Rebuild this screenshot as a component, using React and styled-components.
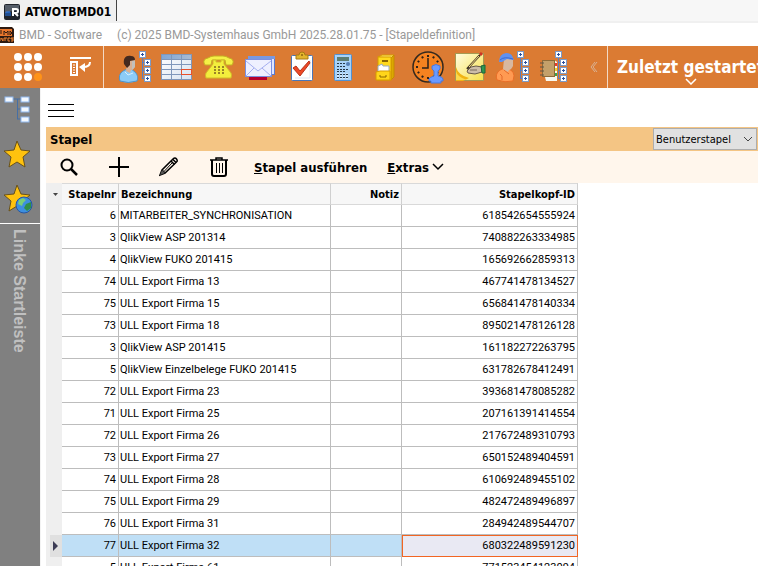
import React, { useState } from "react";

import styled, { createGlobalStyle } from "styled-components";

const rows = [
  { nr: 6, name: "MITARBEITER_SYNCHRONISATION", id: "618542654555924" },
  { nr: 3, name: "QlikView ASP 201314", id: "740882263334985" },
  { nr: 4, name: "QlikView FUKO 201415", id: "165692662859313" },
  { nr: 74, name: "ULL Export Firma 13", id: "467741478134527" },
  { nr: 75, name: "ULL Export Firma 15", id: "656841478140334" },
  { nr: 73, name: "ULL Export Firma 18", id: "895021478126128" },
  { nr: 3, name: "QlikView ASP 201415", id: "161182272263795" },
  { nr: 5, name: "QlikView Einzelbelege FUKO 201415", id: "631782678412491" },
  { nr: 72, name: "ULL Export Firma 23", id: "393681478085282" },
  { nr: 71, name: "ULL Export Firma 25", id: "207161391414554" },
  { nr: 72, name: "ULL Export Firma 26", id: "217672489310793" },
  { nr: 73, name: "ULL Export Firma 27", id: "650152489404591" },
  { nr: 74, name: "ULL Export Firma 28", id: "610692489455102" },
  { nr: 75, name: "ULL Export Firma 29", id: "482472489496897" },
  { nr: 76, name: "ULL Export Firma 31", id: "284942489544707" },
  { nr: 77, name: "ULL Export Firma 32", id: "680322489591230" },
  { nr: 5, name: "ULL Export Firma 61", id: "771523454123094" },
];

// small plus boxes hanging on a line, shared by the person and book icons
function Tree({ x = 0 }) {
  const boxes = [
    [26 + x, 5],
    [31 + x, 13],
    [31 + x, 21],
    [31 + x, 29],
  ];
  return (
    <g shapeRendering="crispEdges">
      <path
        d={`M${29.5 + x} 11V32.5M${29 + x} 16.5h3M${29 + x} 24.5h3M${29 + x} 32.5h3`}
        stroke="#5a7fc0"
        fill="none"
      />
      {boxes.map(([bx, by]) => (
        <g key={by}>
          <rect x={bx} y={by} width="7" height="7" fill="#7d9ac6" />
          <rect x={bx + 1} y={by + 1} width="5" height="5" fill="#fff" />
          <path
            d={`M${bx + 2} ${by + 3.5}h3M${bx + 3.5} ${by + 2}v3`}
            stroke="#2b4f9c"
          />
        </g>
      ))}
    </g>
  );
}

function PersonIcon() {
  return (
    <svg width="42" height="42" viewBox="0 0 42 42">
      <path
        d="M12 24L17 22L22 26C25 29 25 32 24 35Q15 38 7 35C5 29 8 26 12 24Z"
        fill="#8ccbf7"
        stroke="#4f93c9"
      />
      <path d="M12 26L15 29L20 27" stroke="#d5efff" fill="none" />
      <path d="M14 14L22 13V20Q21 24 18 24L17 27L13 25Z" fill="#d9b094" />
      <path d="M19 15h3v6l-3 3z" fill="#c3c0bc" />
      <path d="M11 18C10 12 13 9 18 10Q22 10 22 14L17 15V19L14 22Z" fill="#43291f" />
      <Tree />
    </svg>
  );
}

function TableIcon() {
  return (
    <svg width="42" height="42" viewBox="0 0 42 42" shapeRendering="crispEdges">
      <defs>
        <linearGradient id="tableHead">
          <stop offset="0" stopColor="#7fa6d6" />
          <stop offset="1" stopColor="#aabbd2" />
        </linearGradient>
        <linearGradient id="tableBody" x2="1" y2="1">
          <stop offset="0" stopColor="#fff" />
          <stop offset="1" stopColor="#d7e2f0" />
        </linearGradient>
      </defs>
      <rect x="6" y="8" width="31" height="26" fill="url(#tableBody)" />
      <rect x="6" y="8" width="31" height="6" fill="url(#tableHead)" />
      <path
        d="M6.5 8.5h30v25h-30zM16.5 8v26M26.5 8v26M6 13.5h31M6 18.5h31M6 23.5h31M6 28.5h31"
        stroke="#7f97bb"
        fill="none"
      />
      <path d="M26.5 23.5h10v5h-10z" stroke="#e8502c" fill="none" />
    </svg>
  );
}

function PhoneIcon() {
  return (
    <svg width="42" height="42" viewBox="0 0 42 42">
      <path
        d="M7 17Q6 13 11 12Q14 10 17 10H26Q29 10 32 12Q37 13 36 17L35 19H29L28 14H15L14 19H8Z"
        fill="#f5f046"
        stroke="#c5b023"
      />
      <path
        d="M16 14h3v2h5v-2h3v4L34 27Q35 29 34 32H9Q8 29 9 27L16 18Z"
        fill="#f3ee3d"
        stroke="#d2bd28"
      />
      <path
        d="M17 21h2m2 0h2m2 0h2M17 24h2m2 0h2m2 0h2M17 27h2m2 0h2m2 0h2"
        stroke="#9b8527"
        strokeWidth="2"
      />
    </svg>
  );
}

function MailIcon() {
  return (
    <svg width="42" height="42" viewBox="0 0 42 42">
      <rect x="9.5" y="10.5" width="26" height="18" fill="#e0e6ff" stroke="#5a7bd0" />
      <rect x="9" y="10" width="27" height="3" fill="#7998df" />
      <rect x="6.5" y="13.5" width="26" height="17" fill="#eef0ff" stroke="#7a8fe0" />
      <path d="M7 15L19 25L32 15M7 30L15 22M32 30L23 22" stroke="#a5aff0" fill="none" />
      <rect x="10" y="31" width="18" height="3" fill="#b5002e" />
    </svg>
  );
}

function ClipboardIcon() {
  return (
    <svg width="42" height="42" viewBox="0 0 42 42">
      <rect x="10.5" y="9.5" width="21" height="25" rx="1" fill="#fff" stroke="#4a76b8" />
      <path d="M14 32h15M29 14v18" stroke="#dce6f3" />
      <path d="M15 13V9H18Q18 6 21 6T24 9H27V13Z" fill="#e3b52d" stroke="#a87a14" />
      <circle cx="21" cy="9" r="1" fill="#8e6410" />
      <path d="M12 22L15 20L19 25L28 15L29 17L19 30Z" fill="#ed4825" stroke="#b8321a" />
    </svg>
  );
}

function CalculatorIcon() {
  return (
    <svg width="42" height="42" viewBox="0 0 42 42">
      <rect x="11.5" y="8.5" width="17" height="26" rx="1" fill="#a8d2f8" stroke="#5191d2" />
      <rect x="14" y="11" width="12" height="4" fill="#5d7d73" />
      <g stroke="#263849" strokeWidth="1">
        <path d="M14 17.5h2m1 0h2m1 0h2M14 20.500h2m1 0h2m1 0h2" />
        <path d="M14 23.500h2m1 0h2m1 0h2m1 0h2M14 25.500h2m1 0h2m1 0h2" />
        <path d="M14 28.500h2m1 0h2m1 0h2m1 0h2M14 31.500h2m1 0h2m1 0h2m1 0h2" stroke="#f4faff" strokeWidth="2" />
        <path d="M14 28.500h2m1 0h2m1 0h2m1 0h2M14 31.500h2m1 0h2m1 0h2m1 0h2" />
      </g>
      <circle cx="25" cy="18" r="2" fill="#537eb5" />
    </svg>
  );
}

function CabinetIcon() {
  return (
    <svg width="42" height="42" viewBox="0 0 42 42">
      <path d="M13 11L17 9H29L26 12Z" fill="#ffe869" stroke="#d79c00" />
      <path d="M26 12L29 9V31L26 34Z" fill="#dba800" stroke="#c48c00" />
      <rect x="13" y="11" width="13" height="23" fill="#ffd91d" stroke="#d79c00" />
      <path d="M17 15h6" stroke="#8c6700" strokeWidth="2" />
      <path d="M13 25V20L17 18L18 20H24V26H13Z" fill="#fff" stroke="#9aa9c0" />
      <path d="M11 26L15 25H25V34H11Z" fill="#ffd51a" stroke="#d79c00" />
      <path d="M15 29v2h6v-2" stroke="#8c6700" fill="none" />
    </svg>
  );
}

function ClockIcon() {
  return (
    <svg width="42" height="42" viewBox="0 0 42 42">
      <circle cx="21" cy="21" r="15" fill="#f58220" stroke="#33291f" strokeWidth="1.5" />
      <g fill="#2d2118">
        {[0, 30, 60, 90, 120, 150, 180, 210, 240, 270, 300, 330].map((a) => (
          <rect key={a} x="20" y="9" width="2" height="2" transform={`rotate(${a} 21 21)`} />
        ))}
      </g>
      <path d="M21 12V22H15" stroke="#2d2118" fill="none" strokeWidth="1.5" />
      <path
        d="M25 20Q29 17 33 20V23L31 25V30Q36 31 36 33V35H34V37H24V35H22V33Q23 31 27 30V25L25 23Z"
        fill="#6b9aff"
        stroke="#4a78dc"
      />
    </svg>
  );
}

function NoteIcon() {
  return (
    <svg width="42" height="42" viewBox="0 0 42 42">
      <defs>
        <linearGradient id="note" x2="1" y2="1">
          <stop offset="0" stopColor="#fffce0" />
          <stop offset="1" stopColor="#f7e04a" />
        </linearGradient>
      </defs>
      <rect x="6.5" y="7.5" width="28" height="27" fill="url(#note)" stroke="#a59a52" />
      <path d="M7 21Q9 29 20 32L14 35H7Z" fill="#f0b414" />
      <path d="M7 25Q8 31 18 34H7Z" fill="#fcd94c" />
      <path d="M18 25L22 21L27 20L33 21V26L26 28L19 27Z" fill="#cdbda9" stroke="#66584b" />
      <path d="M21 24L28 24" stroke="#786a5c" />
      <path d="M18 23L31 9" stroke="#3c3022" strokeWidth="2" />
      <path d="M20 21L30 10" stroke="#ffe28a" />
      <path d="M31 9L33 7" stroke="#cf3325" strokeWidth="3" />
      <path d="M32 20L36 19V27L33 27Z" fill="#309750" stroke="#1c663a" />
    </svg>
  );
}

function WorkerIcon() {
  return (
    <svg width="42" height="42" viewBox="0 0 42 42">
      <path
        d="M11 23L17 22L22 26Q24 29 22 35Q14 37 6 34C4 28 7 25 11 23Z"
        fill="#ff9a52"
        stroke="#e86e27"
      />
      <path d="M9 28Q12 29 11 34M13 24L18 28" stroke="#e2692a" fill="none" />
      <path d="M13 13L22 13V20Q20 24 18 24L17 26L12 23Z" fill="#d8b8a0" />
      <path d="M8 16Q8 8 15 7Q21 7 22 12L23 14L16 13L11 16Z" fill="#5f91f1" />
      <path d="M9 14Q13 10 22 13" stroke="#3d6bce" fill="none" />
      <Tree />
    </svg>
  );
}

function BookIcon() {
  return (
    <svg width="42" height="42" viewBox="0 0 42 42">
      <path d="M12 31H21V14L24 16V35H13Z" fill="#f7f7ee" />
      <path d="M23 17v3" stroke="#e53a31" strokeWidth="2" />
      <path d="M23 22v3" stroke="#f3d52e" strokeWidth="2" />
      <path d="M23 27v3" stroke="#3ba44d" strokeWidth="2" />
      <rect x="9.5" y="14.5" width="12" height="16" fill="#c3a06a" stroke="#8d6b39" />
      <path d="M7 17h4M7 21h4M7 25h4M7 29h4" stroke="#5e5547" />
      <Tree x={-4} />
    </svg>
  );
}

const tools = [
  { name: "Personen", Icon: PersonIcon },
  { name: "Tabelle", Icon: TableIcon },
  { name: "Telefon", Icon: PhoneIcon },
  { name: "Nachrichten", Icon: MailIcon },
  { name: "Aufgaben", Icon: ClipboardIcon },
  { name: "Rechner", Icon: CalculatorIcon },
  { name: "Archiv", Icon: CabinetIcon },
  { name: "Zeiterfassung", Icon: ClockIcon },
  { name: "Notizen", Icon: NoteIcon },
  { name: "Mitarbeiter", Icon: WorkerIcon },
  { name: "Kontenplan", Icon: BookIcon },
];

const star =
  "M13 1L17 10L26 11L19 17L21 27L13 22L5 27L7 17L0 11L10 10Z";

function App() {
  const [selected, setSelected] = useState(15);
  const [kind, setKind] = useState("Benutzerstapel");

  return (
    <Page>
      <GlobalStyle />
      <TabBar>
        <Tab>
          <svg width="16" height="16" viewBox="0 0 16 16">
            <rect width="16" height="16" rx="2" fill="#20242c" />
            <path d="M1 1H15V6Q8 7 1 9Z" fill="#555d69" />
            <path d="M2 12V8h2v4M4 8h2v4" stroke="#2479f0" fill="none" />
            <path d="M9 12V5h3q2 0 2 2t-2 2H9M11 9l3 3" stroke="#fff" fill="none" strokeWidth="2" />
          </svg>
          ATWOTBMD01
        </Tab>
      </TabBar>
      <TitleBar>
        <svg width="14" height="16" viewBox="0 0 14 16">
          <path d="M0 0H12L14 2V16H0Z" fill="#2d1a11" />
          <path d="M0 2H12V9H0Z" fill="#e8762c" />
          <path
            d="M0 4h2M0 6h2M4 8V4l2 2l2-2v4M10 4v4l2-2z"
            stroke="#2d1a11"
            fill="none"
          />
          <path d="M0 11v3M1 11l2 3v-3M4 11h3M5 11v3M10 11H8v3h2M14 11h-3v1h2v2h-2" stroke="#f28433" fill="none" />
        </svg>
        <span>BMD - Software</span>
        <span>(c) 2025 BMD-Systemhaus GmbH 2025.28.01.75 - [Stapeldefinition]</span>
      </TitleBar>

      <Ribbon>
        <RibbonStart>
          <RibbonButton aria-label="Menü">
            <svg width="28" height="28" viewBox="0 0 28 28" fill="#fff">
              {[4, 14, 24].map((y) =>
                [4, 14, 24].map((x) => (
                  <circle
                    key={x + "-" + y}
                    cx={x}
                    cy={y}
                    r="4"
                    fill={x === 24 && y === 24 ? "#ff9318" : "#fff"}
                  />
                ))
              )}
            </svg>
          </RibbonButton>
          <RibbonButton aria-label="Zurück">
            <svg width="22" height="20" viewBox="0 0 22 20" fill="none" stroke="#fff">
              <path d="M0 1h21" strokeWidth="2" />
              <rect x="1" y="5" width="6" height="13" strokeWidth="2" />
              <path d="M3 8h2M3 10.500h2M3 13h2M3 15.500h2" />
              <path d="M20 5Q20 10 13 10" strokeWidth="2" />
              <path d="M15 6V15L9 10Z" fill="#fff" stroke="none" />
            </svg>
          </RibbonButton>
        </RibbonStart>
        <ToolList>
          {tools.map(({ name, Icon }) => (
            <RibbonButton key={name} aria-label={name}>
              <Icon />
            </RibbonButton>
          ))}
        </ToolList>
        <Collapse aria-label="Einklappen">
          <svg width="8" height="12" viewBox="0 0 8 12" fill="none" stroke="#d9b294">
            <path d="M5 1L1 6L5 11M7 1L3 6L7 11" />
          </svg>
        </Collapse>
        <Recent>
          <span>Zuletzt gestartet</span>
          <svg width="12" height="7" viewBox="0 0 12 7" fill="none" stroke="#fff" strokeWidth="1.5">
            <path d="M1 1L6 6L11 1" />
          </svg>
        </Recent>
      </Ribbon>

      <Body>
        <Sidebar>
          <SideButton aria-label="Struktur">
            <svg width="28" height="28" viewBox="0 0 28 28">
              <path d="M8 4h9M13.500 4v20M13 14h4M13 24h4" stroke="#456fa5" />
              <g fill="#f4f9ff" stroke="#8fb7ed">
                <rect x="1" y="2" width="8" height="5" />
                <rect x="17" y="2" width="8" height="5" />
                <rect x="17" y="12" width="8" height="5" />
                <rect x="17" y="22" width="8" height="5" />
              </g>
            </svg>
          </SideButton>
          <SideButton aria-label="Favoriten">
            <svg width="28" height="28" viewBox="0 0 28 28">
              <path d={star} fill="#ffc20e" stroke="#68521c" />
            </svg>
          </SideButton>
          <SideButton aria-label="Web Favoriten">
            <svg width="29" height="30" viewBox="0 0 29 30">
              <path d={star} fill="#ffc20e" stroke="#68521c" />
              <circle cx="20" cy="21" r="8" fill="#3d8fe0" stroke="#27569f" />
              <path d="M15 16L19 14L22 16L19 19L18 22L14 20Z" fill="#79ce78" />
              <path d="M22 20L27 18L27 24L23 27L20 24Z" fill="#2f8f4a" />
            </svg>
          </SideButton>
          <SideLabel>Linke Startleiste</SideLabel>
        </Sidebar>

        <Content>
          <Burger aria-label="Navigation">
            <i />
            <i />
            <i />
          </Burger>
          <PanelHead>
            <h1>Stapel</h1>
            <SelectWrap>
              <select
                aria-label="Stapelart"
                value={kind}
                onChange={(e) => setKind(e.target.value)}
              >
                <option>Benutzerstapel</option>
                <option>Systemstapel</option>
              </select>
              <svg width="10" height="6" viewBox="0 0 10 6" fill="none" stroke="#444">
                <path d="M1 1L5 5L9 1" />
              </svg>
            </SelectWrap>
          </PanelHead>
          <ActionBar>
            <IconButton aria-label="Suchen">
              <svg width="18" height="18" viewBox="0 0 18 18" fill="none" stroke="#000">
                <circle cx="7" cy="7" r="5.500" strokeWidth="2" />
                <path d="M11 11L17 17" strokeWidth="2.500" />
              </svg>
            </IconButton>
            <IconButton aria-label="Neu">
              <svg width="20" height="20" viewBox="0 0 20 20" stroke="#000" strokeWidth="2">
                <path d="M10 0V20M0 10H20" />
              </svg>
            </IconButton>
            <IconButton aria-label="Bearbeiten">
              <svg width="20" height="20" viewBox="0 0 20 20" fill="none" stroke="#000" strokeWidth="1.500">
                <path d="M1 18L3 13L14 2Q16 0 17.500 2T17.500 5L6 16Z" />
                <path d="M3 13L6 16M12 4L15.500 7.500M14 2.500L17 5.500" />
                <path d="M5 14.500L13 6" strokeWidth="1" />
                <path d="M1 18L3 13L6 16Z" fill="#555" stroke="none" />
              </svg>
            </IconButton>
            <IconButton aria-label="Löschen">
              <svg width="18" height="20" viewBox="0 0 18 20" fill="none" stroke="#000">
                <path d="M0 3h18M6 3V1h6v2" strokeWidth="1.500" />
                <path d="M2 3V17Q2 19 4 19H14Q16 19 16 17V3" strokeWidth="2" />
                <path d="M6.500 6v10M9.500 6v10M12.500 6v10" />
              </svg>
            </IconButton>
            <TextButton>
              <span>
                <u>S</u>tapel ausführen
              </span>
            </TextButton>
            <TextButton>
              <span>
                <u>E</u>xtras
              </span>
              <svg width="12" height="8" viewBox="0 0 12 8" fill="none" stroke="#000" strokeWidth="1.500">
                <path d="M1 1L6 6L11 1" />
              </svg>
            </TextButton>
          </ActionBar>

          <Table>
            <colgroup>
              <Col $w={16} />
              <Col $w={57} />
              <Col $w={212} />
              <Col $w={71} />
              <Col $w={176} />
            </colgroup>
            <thead>
              <tr>
                <GutterHead aria-label="Markierung">
                  <svg width="5" height="3" viewBox="0 0 5 3">
                    <path d="M0 0h5L2.500 3z" fill="#444" />
                  </svg>
                </GutterHead>
                <Th $right>Stapelnr</Th>
                <Th>Bezeichnung</Th>
                <Th $right>Notiz</Th>
                <Th $right>Stapelkopf-ID</Th>
              </tr>
            </thead>
            <tbody>
              {rows.map((row, idx) => {
                const active = idx === selected;
                return (
                  <Row key={row.id} $active={active} onClick={() => setSelected(idx)}>
                    <Gutter $active={active}>
                      {active && (
                        <svg width="5" height="10" viewBox="0 0 5 10">
                          <path d="M0 0L5 5L0 10z" fill="#3c3c55" />
                        </svg>
                      )}
                    </Gutter>
                    <Td $right>{row.nr}</Td>
                    <Td>{row.name}</Td>
                    <Td />
                    <Td $right $focus={active}>
                      {row.id}
                    </Td>
                  </Row>
                );
              })}
            </tbody>
          </Table>
        </Content>
      </Body>
    </Page>
  );
}

export default App;

const GlobalStyle = createGlobalStyle`
  * {
    box-sizing: border-box;
  }
  body {
    margin: 0;
    background: #fff;
    color: #000;
    font-family: "DejaVu Sans Condensed", "Noto Sans", sans-serif;
    font-size: 11px;
  }
  button {
    border: 0;
    padding: 0;
    background: none;
    color: inherit;
    font: inherit;
    cursor: pointer;
  }
  svg {
    display: block;
    flex: none;
  }
`;

const Page = styled.div`
  height: 100vh;
  display: flex;
  flex-direction: column;
  overflow: hidden;
`;

const TabBar = styled.div`
  flex: none;
  height: 23px;
  display: flex;
  align-items: flex-start;
  background: #f7f7f7;
  border-bottom: 2px solid #f0f0f0;
`;

const Tab = styled.button`
  height: 21px;
  display: flex;
  align-items: center;
  gap: 5px;
  && {
    padding: 2px 5px 0 4px;
    border-right: 1px solid #444;
    background: #f0f0f0;
    font-size: 12px;
    font-weight: 700;
  }
`;

const TitleBar = styled.div`
  flex: none;
  height: 23px;
  display: flex;
  align-items: center;
  color: #999;
  font-family: Roboto, "Open Sans", sans-serif;
  font-size: 12px;
  white-space: nowrap;
  & span:nth-of-type(1) {
    margin: 0 15px 0 5px;
  }
`;

const Ribbon = styled.div`
  flex: none;
  height: 42px;
  display: flex;
  background: #db7b33;
  color: #fff;
`;

const RibbonStart = styled.div`
  width: 104px;
  flex: none;
  display: flex;
  justify-content: space-between;
  padding: 0 11px 0 14px;
  border-right: 1px solid #f3d9c5;
`;

const RibbonButton = styled.button`
  display: flex;
  align-items: center;
  flex: none;
`;

const ToolList = styled.div`
  display: flex;
  flex: none;
  margin-left: 9px;
`;

const Collapse = styled.button`
  width: 32px;
  flex: none;
  display: flex;
  align-items: center;
  justify-content: center;
  && {
    padding-left: 6px;
  }
`;

const Recent = styled.button`
  flex: 1 0 auto;
  display: flex;
  flex-direction: column;
  align-items: center;
  && {
    padding: 11px 0 0 9px;
    border-left: 1px solid #f3d9c5;
    font-size: 17px;
    font-weight: 700;
    line-height: 21px;
    white-space: nowrap;
  }
`;

const Body = styled.div`
  flex: 1;
  min-height: 0;
  display: flex;
`;

const Sidebar = styled.div`
  width: 40px;
  flex: none;
  display: flex;
  flex-direction: column;
  background: #808080;
`;

const SideButton = styled.button`
  height: 45px;
  display: flex;
  align-items: center;
  && {
    padding: 0 0 4px 4px;
  }
`;

const SideLabel = styled.div`
  flex: 1;
  display: flex;
  align-items: center;
  padding: 5px 2px 0 0;
  border-top: 1px solid #fff;
  color: #c0c0c0;
  font: bold 16px "Liberation Sans", sans-serif;
  writing-mode: vertical-rl;
  white-space: nowrap;
`;

const Content = styled.div`
  flex: 1;
  min-width: 0;
  padding-left: 5px;
  border-left: 1px solid #f3f3f3;
`;

const Burger = styled.button`
  height: 39px;
  width: 28px;
  display: flex;
  flex-direction: column;
  justify-content: center;
  gap: 5px;
  && {
    padding: 6px 0 0 2px;
  }
  & i {
    height: 1px;
    background: #000;
  }
`;

const PanelHead = styled.div`
  height: 24px;
  display: flex;
  align-items: center;
  justify-content: space-between;
  padding: 0 1px 0 4px;
  background: #f4c584;
  & h1 {
    margin: 0;
    font-size: 13px;
  }
`;

const SelectWrap = styled.div`
  position: relative;
  & select {
    display: block;
    width: 104px;
    height: 22px;
    padding: 0 2px;
    appearance: none;
    border: 1px solid #adadad;
    border-radius: 0;
    background: #e1e1e1;
    font: inherit;
  }
  & svg {
    position: absolute;
    right: 4px;
    top: 8px;
    pointer-events: none;
  }
`;

const ActionBar = styled.div`
  height: 32px;
  display: flex;
  align-items: center;
  gap: 4px;
  background: #fff6ec;
`;

const IconButton = styled.button`
  width: 46px;
  height: 100%;
  display: flex;
  align-items: center;
  justify-content: center;
`;

const TextButton = styled.button`
  display: flex;
  align-items: center;
  gap: 3px;
  && {
    margin: 0 8px;
    font-size: 13px;
    font-weight: 700;
  }
`;

const Table = styled.table`
  table-layout: fixed;
  width: 532px;
  border-collapse: separate;
  border-spacing: 0;
`;

const Col = styled.col`
  width: ${({ $w }) => $w}px;
`;

const Th = styled.th`
  height: 22px;
  padding: 0 2px;
  border-top: 1px solid #d9d9d9;
  border-right: 1px solid #d0d0d0;
  border-bottom: 1px solid #d9d9d9;
  background: #f7f7f7;
  font-size: 11px;
  text-align: ${({ $right }) => ($right ? "right" : "left")};
`;

const GutterHead = styled.th`
  padding: 0 0 0 7px;
  background: #efefef;
`;

const Row = styled.tr`
  background: ${({ $active }) => ($active ? "#bfdff6" : "#fff")};
`;

const Td = styled.td`
  height: 22px;
  padding: 0 2px 0 1px;
  border-right: 1px solid #bdbdbd;
  border-bottom: 1px solid #bdbdbd;
  font-family: Roboto, "Noto Sans", sans-serif;
  text-align: ${({ $right }) => ($right ? "right" : "left")};
  white-space: nowrap;
  ${({ $focus }) =>
    $focus &&
    `
    background: #e9e9f3;
    outline: 1px solid #f26522;
    outline-offset: -1px;
  `}
`;

const Gutter = styled.td`
  padding: 0 0 0 3px;
  border-left: 4px solid #efefef;
  background: ${({ $active }) => ($active ? "#e0e0e0" : "#efefef")};
`;
